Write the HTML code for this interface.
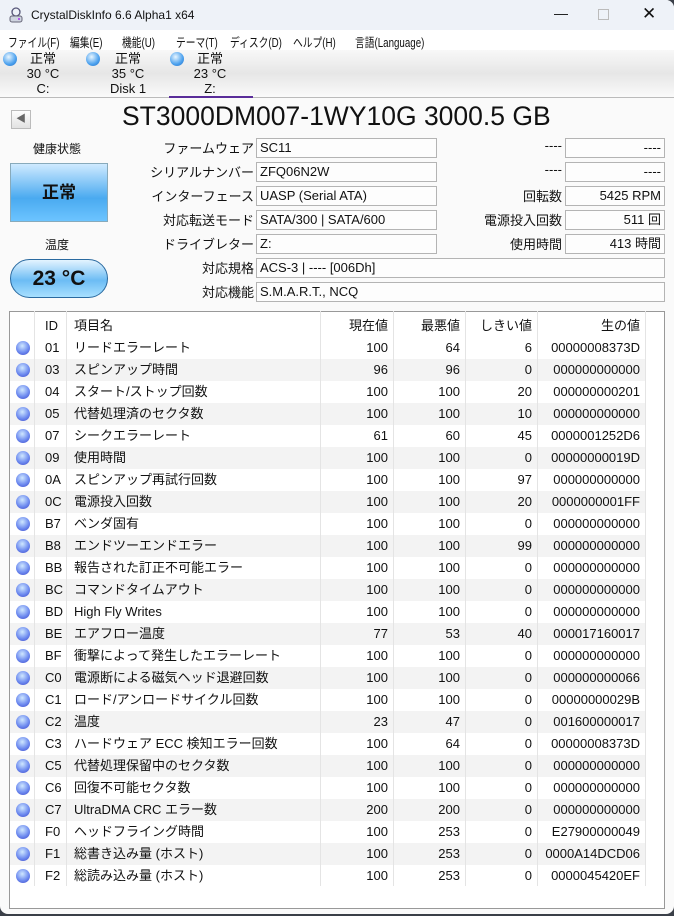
<!DOCTYPE html><html><head><meta charset="utf-8"><style>
*{margin:0;padding:0;box-sizing:border-box}
body{width:674px;height:916px;overflow:hidden;background:#3a3f48;font-family:"Liberation Sans","Noto Sans CJK JP",sans-serif;font-size:13px;color:#111;position:relative}
.win{position:absolute;left:0;top:0;width:674px;height:914px;background:#fafafa;border-radius:0 8px 8px 8px;overflow:hidden}
.a{position:absolute;white-space:nowrap}
.title{left:0;top:0;width:674px;height:30px;background:#eef2f8}
.menu{left:0;top:30px;width:674px;height:20px;background:#fff}
.m{position:absolute;top:32px;font-size:12.5px;transform:scaleX(0.78);transform-origin:0 0;white-space:nowrap}
.tabs{left:0;top:50px;width:674px;height:48px;background:linear-gradient(#f8f8f8,#e6e6e6 50%,#fafafa);border-bottom:1px solid #bbb}
.orb{position:absolute;width:14px;height:14px;border-radius:50%;background:radial-gradient(circle at 40% 35%,#e8f6ff,#4aa0ee 60%,#2a6fc0)}
.lab{text-align:right;width:160px;font-size:13px}
.box{position:absolute;height:20px;border:1px solid #b4b4b4;background:#fdfdfd;padding:1px 3px;font-size:13px;line-height:16px}
.tbl{left:9px;top:311px;width:656px;height:598px;border:1px solid #999;background:#fff}
.row{position:absolute;left:0;width:636px;height:22px;line-height:22px}
.row.alt{background:#f3f3f3}
.row span{position:absolute}
.c1{left:35px}.c2{left:64px}
.v1{right:258px}.v2{right:186px}.v3{right:114px}.v4{right:6px}
.ro{position:absolute;left:6px;top:4px;width:14px;height:14px;border-radius:50%;background:radial-gradient(circle at 45% 35%,#cfe8ff,#6f8cf0 55%,#3a46c8)}
.vl{position:absolute;top:0;width:1px;background:#e4e4e4}
</style></head><body><div class="win">
<div class="a title"></div>
<svg class="a" style="left:8px;top:7px" width="16" height="16"><circle cx="8" cy="5" r="4" fill="none" stroke="#557" stroke-width="1.3"/><rect x="2" y="9" width="12" height="6" rx="2" fill="#cfd4e0" stroke="#667"/><circle cx="11" cy="12" r="1" fill="#a3e"/></svg>
<div class="a" style="left:31px;top:8px;font-size:12px">CrystalDiskInfo 6.6 Alpha1 x64</div>
<div class="a" style="left:554px;top:5px;font-size:14px">—</div>
<div class="a" style="left:598px;top:9px;width:11px;height:11px;border:1px solid #bbb"></div>
<div class="a" style="left:642px;top:4px;font-size:17px">✕</div>
<div class="a menu"></div>
<div class="m" style="left:8px">ファイル(F)</div><div class="m" style="left:70px">編集(E)</div><div class="m" style="left:122px">機能(U)</div><div class="m" style="left:176px">テーマ(T)</div><div class="m" style="left:230px">ディスク(D)</div><div class="m" style="left:293px">ヘルプ(H)</div><div class="m" style="left:355px">言語(Language)</div>
<div class="a tabs"></div>
<div class="orb" style="left:3px;top:52px"></div><div class="orb" style="left:86px;top:52px"></div><div class="orb" style="left:170px;top:52px"></div>
<div class="a" style="left:23px;top:51px;width:40px;text-align:center;font-size:13px;line-height:15px">正常<br>30 °C<br>C:</div>
<div class="a" style="left:105px;top:51px;width:46px;text-align:center;font-size:13px;line-height:15px">正常<br>35 °C<br>Disk 1</div>
<div class="a" style="left:190px;top:51px;width:40px;text-align:center;font-size:13px;line-height:15px">正常<br>23 °C<br>Z:</div>
<div class="a" style="left:169px;top:96px;width:84px;height:2px;background:#5a2d9a"></div>
<div class="a" style="left:11px;top:110px;width:20px;height:19px;border:1px solid #bbb;background:linear-gradient(#fdfdfd,#e2e2e2);font-size:10px;color:#666;text-align:center;line-height:17px">◀</div>
<div class="a" style="left:122px;top:101px;font-size:26.5px">ST3000DM007-1WY10G 3000.5 GB</div>
<div class="a" style="left:33px;top:140px;font-size:12px">健康状態</div>
<div class="a" style="left:10px;top:163px;width:98px;height:59px;border:1px solid #8ab;background:linear-gradient(#cfeaff,#4aaaf0 60%,#6cc4ff);text-align:center;line-height:57px;font-size:17px;font-weight:bold">正常</div>
<div class="a" style="left:45px;top:236px;font-size:12px">温度</div>
<div class="a" style="left:10px;top:259px;width:98px;height:39px;border:1px solid #2a6aa0;border-radius:20px;background:linear-gradient(#e4f4ff,#6cbcf4 55%,#a8e0ff);text-align:center;line-height:38px;font-size:21px;font-weight:bold">23 °C</div>
<div class="a lab" style="left:94px;top:138px">ファームウェア</div>
<div class="a lab" style="left:94px;top:162px">シリアルナンバー</div>
<div class="a lab" style="left:94px;top:186px">インターフェース</div>
<div class="a lab" style="left:94px;top:210px">対応転送モード</div>
<div class="a lab" style="left:94px;top:234px">ドライブレター</div>
<div class="a lab" style="left:94px;top:258px">対応規格</div>
<div class="a lab" style="left:94px;top:282px">対応機能</div>
<div class="box" style="left:256px;top:138px;width:181px">SC11</div>
<div class="box" style="left:256px;top:162px;width:181px">ZFQ06N2W</div>
<div class="box" style="left:256px;top:186px;width:181px">UASP (Serial ATA)</div>
<div class="box" style="left:256px;top:210px;width:181px">SATA/300 | SATA/600</div>
<div class="box" style="left:256px;top:234px;width:181px">Z:</div>
<div class="box" style="left:256px;top:258px;width:409px">ACS-3 | ---- [006Dh]</div>
<div class="box" style="left:256px;top:282px;width:409px">S.M.A.R.T., NCQ</div>
<div class="a lab" style="left:402px;top:138px">----</div>
<div class="a lab" style="left:402px;top:162px">----</div>
<div class="a lab" style="left:402px;top:186px">回転数</div>
<div class="a lab" style="left:402px;top:210px">電源投入回数</div>
<div class="a lab" style="left:402px;top:234px">使用時間</div>
<div class="box" style="left:565px;top:138px;width:100px;text-align:right">----</div>
<div class="box" style="left:565px;top:162px;width:100px;text-align:right">----</div>
<div class="box" style="left:565px;top:186px;width:100px;text-align:right">5425 RPM</div>
<div class="box" style="left:565px;top:210px;width:100px;text-align:right">511 回</div>
<div class="box" style="left:565px;top:234px;width:100px;text-align:right">413 時間</div>
<div class="a tbl" id="t">
<div class="row" style="top:3px"><span class="c1">ID</span><span class="c2">項目名</span><span class="v1">現在値</span><span class="v2">最悪値</span><span class="v3">しきい値</span><span class="v4">生の値</span></div>
</div>
</div>
<div class="a" style="left:9px;top:311px;width:656px;height:598px;pointer-events:none">
<div class="vl" style="left:25px;height:575px"></div><div class="vl" style="left:57px;height:575px"></div><div class="vl" style="left:311px;height:575px"></div><div class="vl" style="left:384px;height:575px"></div><div class="vl" style="left:456px;height:575px"></div><div class="vl" style="left:528px;height:575px"></div><div class="vl" style="left:636px;height:575px"></div>
</div>
<script>
var d=[["01","リードエラーレート",100,64,6,"00000008373D"],["03","スピンアップ時間",96,96,0,"000000000000"],["04","スタート/ストップ回数",100,100,20,"000000000201"],["05","代替処理済のセクタ数",100,100,10,"000000000000"],["07","シークエラーレート",61,60,45,"0000001252D6"],["09","使用時間",100,100,0,"00000000019D"],["0A","スピンアップ再試行回数",100,100,97,"000000000000"],["0C","電源投入回数",100,100,20,"0000000001FF"],["B7","ベンダ固有",100,100,0,"000000000000"],["B8","エンドツーエンドエラー",100,100,99,"000000000000"],["BB","報告された訂正不可能エラー",100,100,0,"000000000000"],["BC","コマンドタイムアウト",100,100,0,"000000000000"],["BD","High Fly Writes",100,100,0,"000000000000"],["BE","エアフロー温度",77,53,40,"000017160017"],["BF","衝撃によって発生したエラーレート",100,100,0,"000000000000"],["C0","電源断による磁気ヘッド退避回数",100,100,0,"000000000066"],["C1","ロード/アンロードサイクル回数",100,100,0,"00000000029B"],["C2","温度",23,47,0,"001600000017"],["C3","ハードウェア ECC 検知エラー回数",100,64,0,"00000008373D"],["C5","代替処理保留中のセクタ数",100,100,0,"000000000000"],["C6","回復不可能セクタ数",100,100,0,"000000000000"],["C7","UltraDMA CRC エラー数",200,200,0,"000000000000"],["F0","ヘッドフライング時間",100,253,0,"E27900000049"],["F1","総書き込み量 (ホスト)",100,253,0,"0000A14DCD06"],["F2","総読み込み量 (ホスト)",100,253,0,"0000045420EF"]];
var h="";d.forEach(function(r,i){h+='<div class="row'+(i%2?' alt':'')+'" style="top:'+(25+i*22)+'px"><div class="ro"></div><span class="c1">'+r[0]+'</span><span class="c2">'+r[1]+'</span><span class="v1">'+r[2]+'</span><span class="v2">'+r[3]+'</span><span class="v3">'+r[4]+'</span><span class="v4">'+r[5]+'</span></div>'});
document.getElementById("t").insertAdjacentHTML("beforeend",h);
</script>
</body></html>
